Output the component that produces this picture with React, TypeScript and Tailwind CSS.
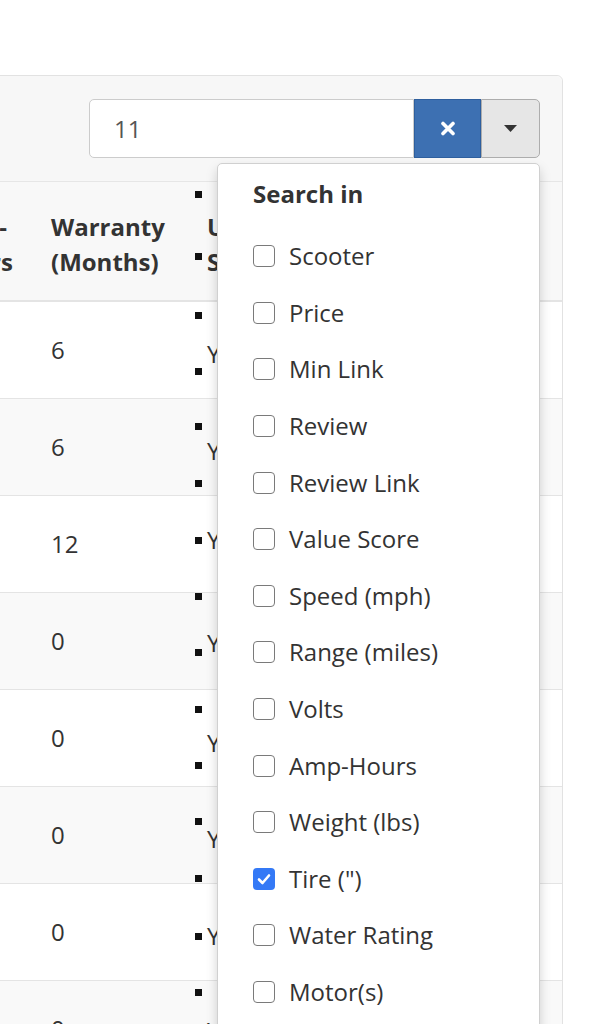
import React from "react";

type Item = { t: "sq" | "y" | "sqy"; m: string };

const rows: { n: string; c: Item[] }[] = [
  { n: "6", c: [{ t: "sq", m: "mt-[10px]" }, { t: "y", m: "mt-[25px]" }, { t: "sq", m: "mt-[4px]" }] },
  { n: "6", c: [{ t: "sq", m: "mt-[24px]" }, { t: "y", m: "mt-[11px]" }, { t: "sq", m: "mt-[19px]" }] },
  { n: "12", c: [{ t: "sqy", m: "mt-[34px]" }] },
  { n: "0", c: [{ t: "sq", m: "mt-0" }, { t: "y", m: "mt-[33px]" }, { t: "sq", m: "mt-[-4px]" }] },
  { n: "0", c: [{ t: "sq", m: "mt-[16px]" }, { t: "y", m: "mt-[20px]" }, { t: "sq", m: "mt-[9px]" }] },
  { n: "0", c: [{ t: "sq", m: "mt-[31px]" }, { t: "y", m: "mt-[4px]" }, { t: "sq", m: "mt-[26px]" }] },
  { n: "0", c: [{ t: "sqy", m: "mt-[42px]" }] },
  { n: "0", c: [{ t: "sq", m: "mt-[8px]" }, { t: "y", m: "mt-[25px]" }] },
];

const fields = [
  "Scooter",
  "Price",
  "Min Link",
  "Review",
  "Review Link",
  "Value Score",
  "Speed (mph)",
  "Range (miles)",
  "Volts",
  "Amp-Hours",
  "Weight (lbs)",
  'Tire (")',
  "Water Rating",
  "Motor(s)",
];

function Sq({ cls }: { cls?: string }) {
  return <div className={`w-[7px] h-[7px] bg-[#111] shrink-0 ${cls ?? ""}`} />;
}

function Check({ checked }: { checked: boolean }) {
  if (checked) {
    return (
      <div className="w-[22px] h-[22px] rounded-[4px] bg-[#3479f6] flex items-center justify-center shrink-0">
        <svg width="16" height="16" viewBox="0 0 16 16">
          <path d="M3 8.5L6.5 12L13 4.5" fill="none" stroke="white" strokeWidth="2.6" strokeLinecap="round" strokeLinejoin="round" />
        </svg>
      </div>
    );
  }
  return <div className="w-[22px] h-[22px] rounded-[4px] border-[1.5px] border-[#7a7a7a] bg-white shrink-0" />;
}

export default function App() {
  return (
    <div className="relative w-[613px] h-[1024px] overflow-hidden bg-white text-[#333] font-['Open_Sans',sans-serif]">
      <div className="mt-[75px] ml-[-60px] w-[623px] border border-[#e2e2e2] rounded-tr-[6px] bg-white">
        {/* panel header */}
        <div className="h-[106px] bg-[#f7f7f7] border-b border-[#e6e6e6] rounded-tr-[6px] flex justify-end pt-[23px] pr-[22px]">
          <div className="relative flex h-[59px] w-[451px]">
            <div className="flex-1 flex items-center pl-[24px] bg-white border border-[#cccccc] rounded-l-[5px] text-[24px] text-[#555]">
              11
            </div>
            <div className="w-[67px] bg-[#3d70b2] border border-[#2e5f9e] flex items-center justify-center">
              <svg width="16" height="15" viewBox="0 0 16 15">
                <path d="M3 2.5L13 12.5M13 2.5L3 12.5" stroke="white" strokeWidth="3.6" strokeLinecap="round" />
              </svg>
            </div>
            <div className="w-[59px] bg-[#e6e6e6] border border-[#adadad] rounded-r-[5px] flex items-center justify-center">
              <svg width="13" height="7" viewBox="0 0 13 7">
                <path d="M0 0H13L6.5 7Z" fill="#333" />
              </svg>
            </div>
            {/* dropdown */}
            <div className="absolute z-10 top-[64px] right-0 w-[323px] h-[900px] bg-white border border-[#d0d0d0] rounded-[5px] shadow-[0_6px_12px_rgba(0,0,0,0.175)] pl-[35px] pt-[12px]">
              <div className="h-[36px] leading-[36px] text-[24px] font-bold text-[#333]">Search in</div>
              <div className="mt-[16px] flex flex-col">
                {fields.map((f) => (
                  <div key={f} className="h-[56.6px] flex items-center gap-[14px]">
                    <Check checked={f === 'Tire (")'} />
                    <span className="text-[24px] text-[#333] leading-none">{f}</span>
                  </div>
                ))}
              </div>
            </div>
          </div>
        </div>
        {/* table header */}
        <div className="grid grid-cols-[97px_147px_1fr] h-[120px] bg-[#f8f8f8] border-b-2 border-[#e4e4e4] text-[24px] font-bold leading-[35px]">
          <div className="pt-[27px] pr-[31px] text-right">
            <div>Amp-</div>
            <div className="mr-[-2px]">Hours</div>
          </div>
          <div className="pt-[27px] pl-[13px]">
            <div>Warranty</div>
            <div>(Months)</div>
          </div>
          <div className="pl-[10px] flex flex-col">
            <Sq cls="mt-[9px]" />
            <div className="mt-[11px] ml-[12px] h-[35px]">Used</div>
            <div className="flex items-start h-[35px]">
              <Sq cls="mt-[9px]" />
              <span className="ml-[5px]">Sale</span>
            </div>
          </div>
        </div>
        {/* body rows */}
        {rows.map((r, i) => (
          <div
            key={i}
            className={`grid grid-cols-[97px_147px_1fr] h-[97px] border-b border-[#e4e4e4] text-[24px] ${
              i % 2 === 1 ? "bg-[#f9f9f9]" : "bg-white"
            }`}
          >
            <div />
            <div className="pl-[13px] flex items-center">{r.n}</div>
            <div className="pl-[10px] flex flex-col">
              {r.c.map((it, k) =>
                it.t === "sq" ? (
                  <Sq key={k} cls={it.m} />
                ) : it.t === "y" ? (
                  <div key={k} className={`ml-[12px] h-[20px] leading-[20px] ${it.m}`}>Yes</div>
                ) : (
                  <div key={k} className={`flex items-center h-[20px] leading-[20px] gap-[5px] ${it.m}`}>
                    <Sq />
                    <span>Yes</span>
                  </div>
                )
              )}
            </div>
          </div>
        ))}
      </div>
    </div>
  );
}
